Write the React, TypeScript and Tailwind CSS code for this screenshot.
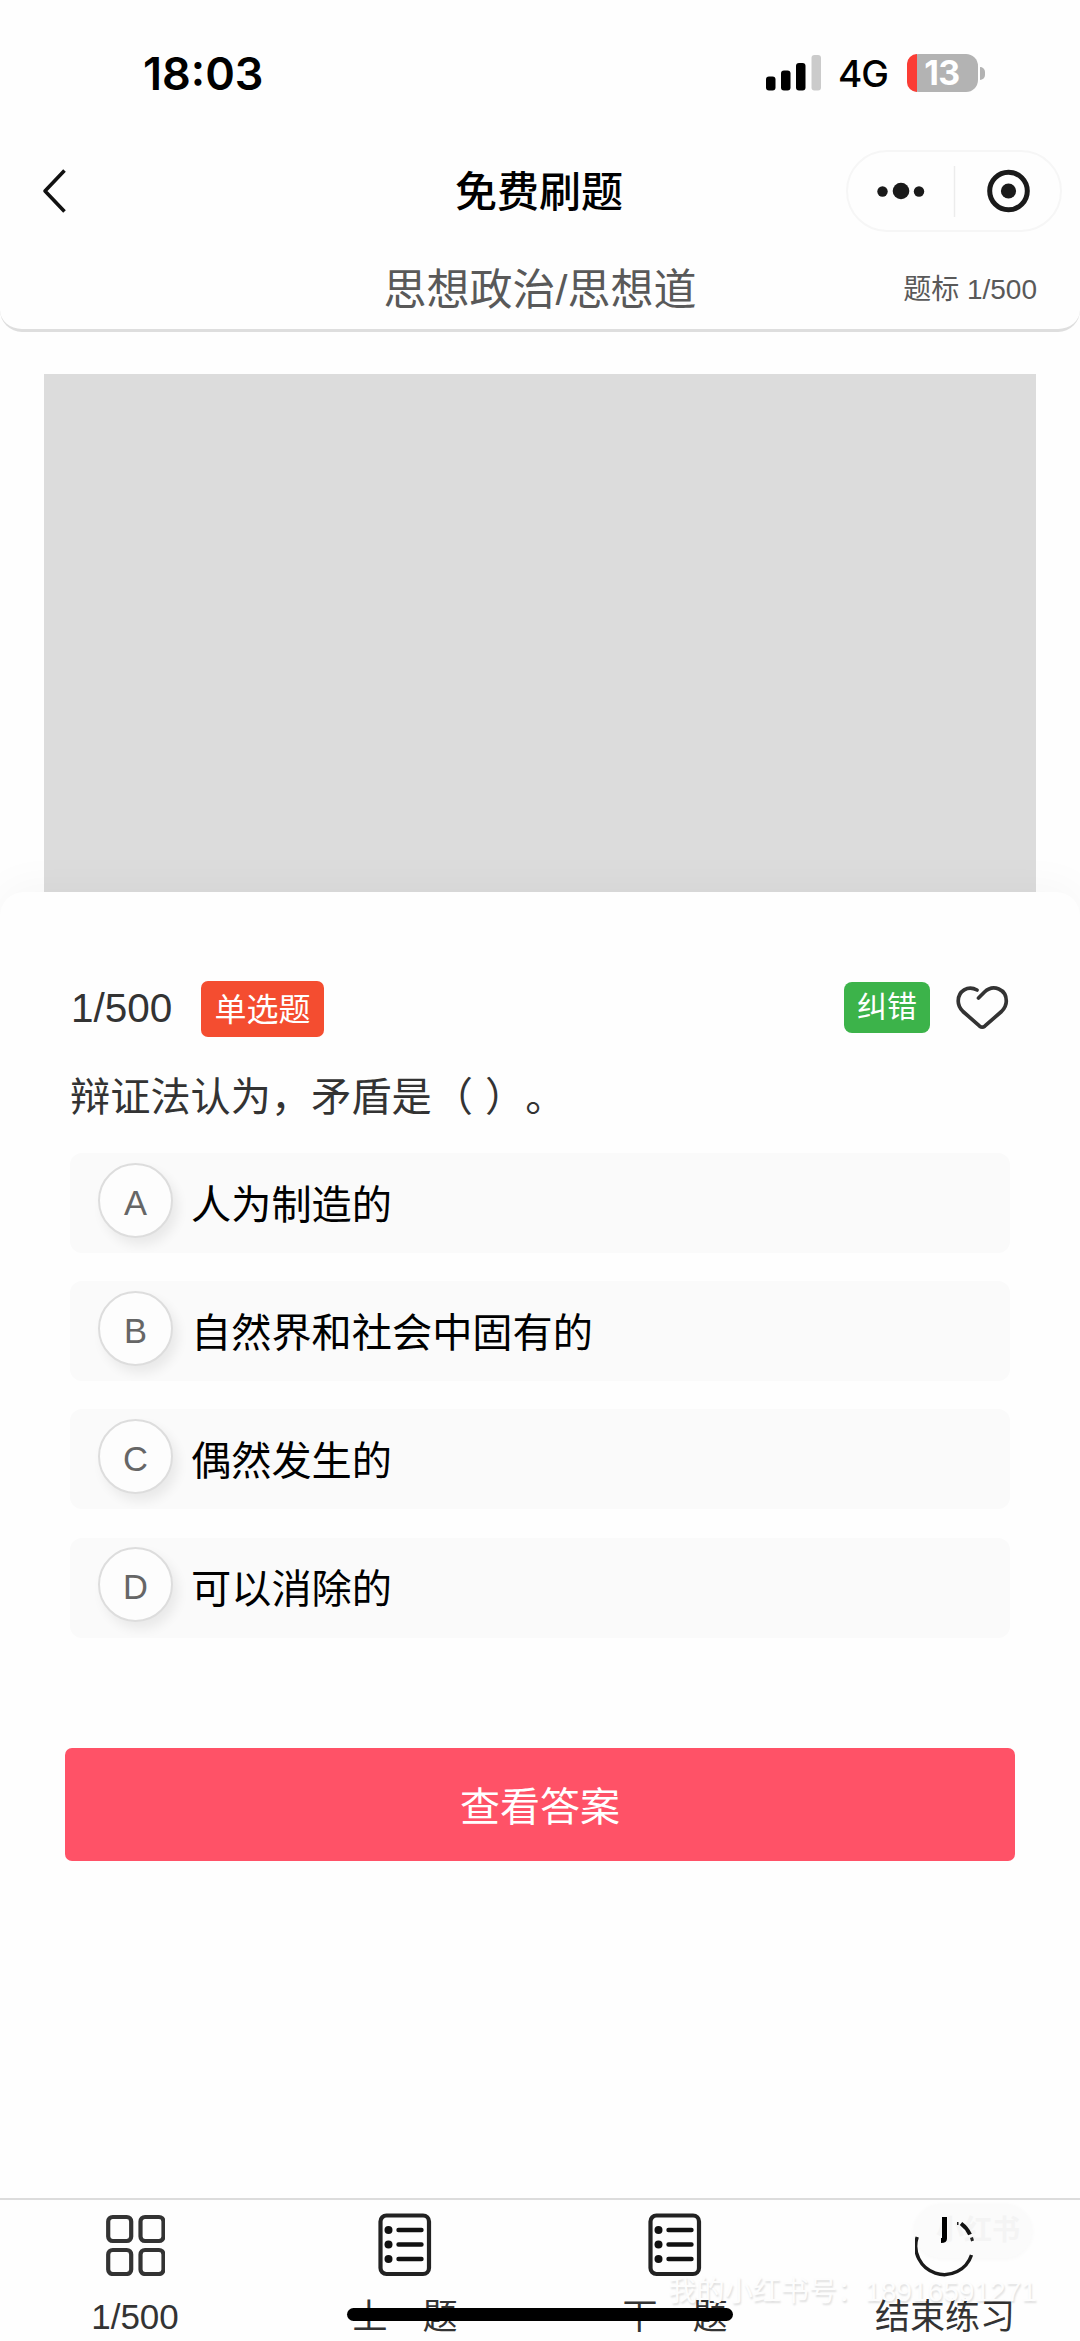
import React from "react";

const options = [
  { key: "A", text: "人为制造的" },
  { key: "B", text: "自然界和社会中固有的" },
  { key: "C", text: "偶然发生的" },
  { key: "D", text: "可以消除的" },
];

function Signal() {
  return (
    <svg width="55" height="36" viewBox="0 0 55 36" className="shrink-0">
      <rect x="0" y="21.5" width="9.5" height="14" rx="3" fill="#000" />
      <rect x="15" y="15.5" width="9.5" height="20" rx="3" fill="#000" />
      <rect x="30" y="8" width="9.5" height="27.5" rx="3" fill="#000" />
      <rect x="45.5" y="0" width="9.5" height="35.5" rx="3" fill="#cbcbcb" />
    </svg>
  );
}

function Battery() {
  return (
    <div className="flex items-center gap-[2px]">
      <div className="flex h-[38px] w-[71px] rounded-[12px] bg-[#b3b3b3]">
        <div className="w-[10px] rounded-l-[12px] bg-[#fb3d35]" />
        <div className="w-[50px] text-center font-[Inter] text-[34px] leading-[38px] font-bold tracking-[-0.5px] text-white">13</div>
      </div>
      <div className="h-[13px] w-[5px] rounded-r-full bg-[#b3b3b3]" />
    </div>
  );
}

function GridIcon() {
  return (
    <svg width="60" height="62" viewBox="0 0 60 62" fill="none" stroke="#333" strokeWidth="4.2">
      <rect x="3.2" y="3" width="23" height="24" rx="4.5" />
      <rect x="35.5" y="3" width="23" height="24" rx="4.5" />
      <rect x="3.2" y="36" width="23" height="24" rx="4.5" />
      <rect x="35.5" y="36" width="23" height="24" rx="4.5" />
    </svg>
  );
}

function ListIcon() {
  return (
    <svg width="54" height="64" viewBox="0 0 54 64" fill="none" stroke="#222" strokeWidth="4.2">
      <rect x="2.5" y="2.5" width="48.5" height="58.5" rx="6" />
      <g fill="#111" stroke="none">
        <circle cx="10.5" cy="17" r="4" />
        <circle cx="10.5" cy="31.5" r="4" />
        <circle cx="10.5" cy="46" r="4" />
      </g>
      <path d="M20.5 17h23M20.5 31.5h23M20.5 46h23" stroke="#111" strokeWidth="4.4" strokeLinecap="round" />
    </svg>
  );
}

function PowerIcon() {
  return (
    <svg width="60" height="64" viewBox="0 0 60 64" fill="none" stroke="#1a1a1a" strokeWidth="3.4">
      <path d="M2.2 24A28.2 28.2 0 1 0 56.5 42" />
      <path d="M46 10.5q6 4.500 9 11" stroke="#111" strokeWidth="4" />
      <path d="M56.500 24.500l1 3.500M42 10.500h1.500" stroke="#222" strokeWidth="3" />
      <path d="M29.500 4V25.500q0 2-3.500 2" stroke="#000" strokeWidth="5" />
    </svg>
  );
}

function Tab({ icon, label }: { icon: React.ReactNode; label: string }) {
  return (
    <div className="relative flex flex-col items-center">
      <div className="flex h-[64px] items-center">{icon}</div>
      <div className="mt-[15px] text-[35px] leading-[50px] whitespace-nowrap text-[#333]">{label}</div>
    </div>
  );
}

export default function App() {
  return (
    <div className="flex h-[2341px] w-[1080px] flex-col overflow-hidden bg-[#fefefe] font-['Liberation_Sans','Noto_Sans_CJK_SC',sans-serif] text-[#333]">
      <header className="flex h-[332px] shrink-0 flex-col rounded-b-[22px] border-b-[3px] border-[#dedede] bg-[#fefefe]">
        <div className="flex h-[148px] shrink-0 items-center justify-between pr-[95px] pl-[143px]">
          <div className="font-[Inter] text-[45px] leading-[56px] font-semibold text-black">18:03</div>
          <div className="mb-[2px] flex items-center">
            <Signal />
            <div className="mt-[2px] mr-[16px] ml-[17px] w-[53px] font-[Inter] text-[37px] leading-[48px] font-medium tracking-[-1px] whitespace-nowrap text-black">4G</div>
            <Battery />
          </div>
        </div>
        <div className="grid h-[86px] shrink-0 grid-cols-[1fr_auto_1fr] items-center px-[18px]">
          <svg width="24" height="44" viewBox="0 0 24 44" fill="none" stroke="#111" strokeWidth="3.6" className="ml-[24px]">
            <path d="M22.5 1.5L3 22L22.5 42.5" strokeLinejoin="round" />
          </svg>
          <h1 className="pt-[4px] pr-[2px] text-[42px] leading-none font-medium text-black">免费刷题</h1>
          <div className="flex h-[82px] w-[216px] items-center justify-self-end rounded-full border-2 border-[#f6f6f6]">
            <svg width="212" height="79" viewBox="0 0 212 79" fill="#1a1a1a">
              <circle cx="34.5" cy="39.5" r="5.2" />
              <circle cx="53" cy="39" r="8.3" />
              <circle cx="71" cy="39.5" r="5.2" />
              <path d="M106.5 14v51" stroke="#ececec" strokeWidth="1.5" />
              <circle cx="160.5" cy="39" r="18.8" fill="none" stroke="#1a1a1a" strokeWidth="5" />
              <circle cx="160.5" cy="39" r="7.6" />
            </svg>
          </div>
        </div>
        <div className="grid h-[95px] shrink-0 grid-cols-[1fr_auto_1fr] items-center px-[43px] pt-[17px]">
          <div />
          <div className="text-[43px] leading-none text-[#595959]">思想政治/思想道</div>
          <div className="justify-self-end text-[28px] leading-none text-[#595959]">题标 1/500</div>
        </div>
      </header>

      <div className="mx-[44px] mt-[42px] h-[518px] shrink-0 bg-[#dcdcdc]" />

      <main className="relative flex grow flex-col rounded-t-[24px] bg-[#fefefe] px-[70px] pt-[86px] shadow-[0_-6px_44px_rgba(0,0,0,0.035)]">
        <div className="flex h-[60px] items-center">
          <span className="w-[131px] pl-[1px] text-[40.5px] leading-none">1/500</span>
          <span className="mt-[1px] flex h-[56px] w-[123px] items-center justify-center rounded-[7px] bg-[#f44d30] pt-[2px] text-[32px] leading-none text-white">单选题</span>
          <span className="mr-[26px] mb-[2px] ml-auto flex h-[51px] w-[86px] items-center justify-center rounded-[8px] bg-[#3cb34a] text-[30px] leading-none text-white">纠错</span>
          <svg width="54" height="46" viewBox="0 0 54 46" fill="none" stroke="#333" strokeWidth="3.7" strokeLinecap="round" strokeLinejoin="round" className="mb-[1px]">
            <path d="M21 5C12 0 2.2 6 2.2 16C2.2 20.5 4 23.5 7 26.5L23.7 41.2Q26.2 43.2 28.7 41.2L45.5 26.5C48.5 23.5 50.3 20.5 50.3 16C50.3 4.5 37.5 -1.5 28.5 7L22.5 13" />
          </svg>
        </div>
        <p className="mt-[30px] text-[40.2px] leading-[60px] whitespace-pre [text-spacing-trim:space-all]">
          辩证法认为，矛盾是<span className="ml-[1px] [word-spacing:1px]">（ ）。</span>
        </p>
        <div className="mt-[25px] flex flex-col gap-[28.2px]">
          {options.map((o) => (
            <div key={o.key} className="flex h-[100px] items-center rounded-[12px] bg-[#fafafa] pl-[28px]">
              <div className="mb-[6px] flex h-[75px] w-[75px] items-center justify-center rounded-full border-2 border-[#dddddd] bg-[#fdfdfd] pt-[6px] text-[34.5px] leading-none text-[#666] shadow-[5px_7px_12px_rgba(0,0,0,0.07)]">{o.key}</div>
              <div className="mt-[6px] ml-[18px] text-[40.2px] leading-none text-black">{o.text}</div>
            </div>
          ))}
        </div>
        <button className="mx-[-5px] mt-[110px] flex h-[113px] items-center justify-center rounded-[7px] bg-[#ff5267] pt-[5px] text-[40px] leading-none text-white">查看答案</button>
      </main>

      <nav className="relative grid h-[143px] shrink-0 grid-cols-4 border-t-2 border-[#dcdcdc] bg-[#fefefe] pt-[13px]">
        <div className="absolute top-[4px] left-[914px] flex h-[54px] w-[118px] items-center justify-center rounded-full bg-[#fbfbfb] pl-[10px] text-[28px] font-bold text-[#f4f4f4] shadow-[0_1px_5px_rgba(0,0,0,0.03)]">小红书</div>
        <Tab icon={<GridIcon />} label="1/500" />
        <Tab icon={<ListIcon />} label="上一题" />
        <Tab icon={<ListIcon />} label="下一题" />
        <Tab icon={<PowerIcon />} label="结束练习" />
        <div className="absolute top-[72px] right-[43px] text-[28.1px] leading-[40px] whitespace-nowrap text-[#fdfdfd] [text-shadow:1px_2px_2px_rgba(0,0,0,0.13)]">我的小红书号：18916591271</div>
        <div className="absolute top-[108px] left-[347px] h-[13px] w-[386px] rounded-full bg-black" />
      </nav>
    </div>
  );
}
